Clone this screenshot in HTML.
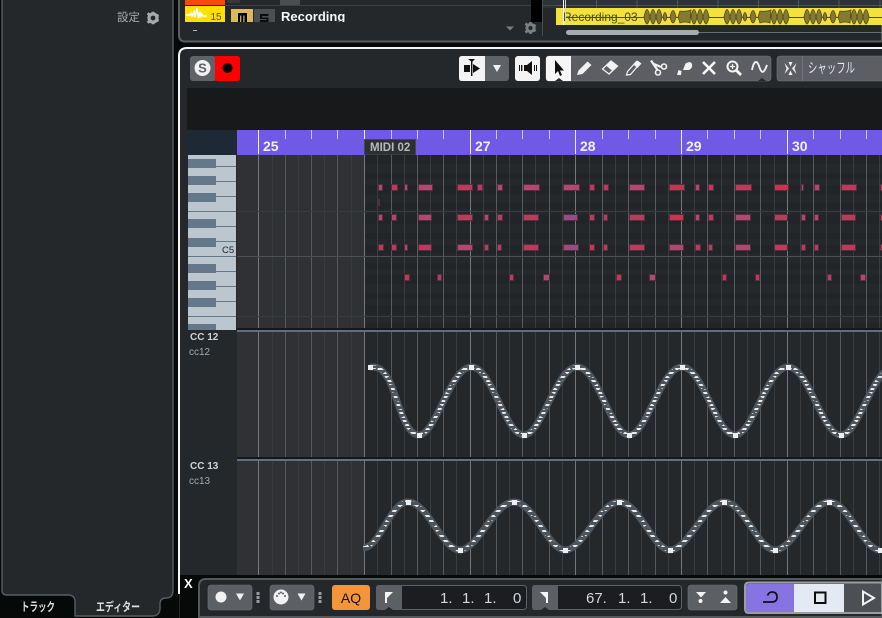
<!DOCTYPE html>
<html><head><meta charset="utf-8"><style>
html,body{margin:0;padding:0;background:#070808;width:882px;height:618px;overflow:hidden}
svg{display:block;font-family:"Liberation Sans","Noto Sans CJK JP",sans-serif}
.n rect{height:6px;stroke:#5c2b3d;stroke-width:1;fill:#b83d5c}
.r1 rect{y:184.5px}.r2 rect{y:199.5px}.r3 rect{y:214.5px}.r4 rect{y:244.5px}.r5 rect{y:274.5px}
.n .b{fill:#ac4a70}.n .p{fill:#934e84}.n .d{fill:#c63650}
.num{font-size:15px;fill:#d3d7db}
.rul{font-size:14px;font-weight:bold;fill:#f2efff}
.cc{font-size:10px;font-weight:bold;fill:#ccd4da}
.cs{font-size:10px;fill:#a0abb3}
</style></head><body>
<svg width="882" height="618" viewBox="0 0 882 618" xmlns="http://www.w3.org/2000/svg">
<defs>
<pattern id="rows" x="0" y="155" width="10" height="30" patternUnits="userSpaceOnUse">
<rect width="10" height="30" fill="#24282b"/>
<rect y="0" width="10" height="9" fill="#222528"/>
<rect y="18" width="10" height="6" fill="#222528"/>
</pattern>
<pattern id="st4" x="0" y="0" width="10" height="4" patternUnits="userSpaceOnUse"><rect y="0" width="10" height="2" fill="#e8eaec"/></pattern>
<pattern id="st5" x="0" y="0" width="10" height="5" patternUnits="userSpaceOnUse"><rect y="0" width="10" height="2" fill="#e8eaec"/></pattern>
<pattern id="wave" x="643" y="8" width="80" height="17" patternUnits="userSpaceOnUse">
<path d="M1 9Q4 -6 7 9Q4 23 1 9ZM7 9Q10 -6 13 9Q10 23 7 9ZM13 9Q16 -6 19 9Q16 23 13 9ZM20 9Q22 0 24 9Q22 17 20 9ZM27 9Q30 -4 33 9Q30 21 27 9ZM35 9L37 3Q42 4 48 2L47 15Q42 13 37 15ZM48 9Q51 -6 54 9Q51 23 48 9ZM54 9Q57 -6 60 9Q57 23 54 9ZM60 9Q63 -6 66 9Q63 23 60 9Z" fill="#857a30" stroke="#4f4a24" stroke-width=".8"/>
</pattern>
<path id="cc12" d="M370 367C378 367 381 367 389 380C397 395 404 435 419 435C436 435 450 367 471.5 367C492 367 505 435 524 435C542 435 556 367 577 367C598 367 611 435 629 435C647 435 661 367 682 367C703 367 716 435 735 435C753 435 767 367 788 367C809 367 822 435 841 435C859 435 873 367 894 367"/>
<path id="cc13" d="M363 548C380 548 390 502 408 502C428 502 442 550 460 550C478 550 494 502 514 502C534 502 548 550 565 550C583 550 600 502 619 502C639 502 653 550 670 550C688 550 705 502 724 502C744 502 758 550 775 550C793 550 810 502 829 502C849 502 863 550 880 550"/>
</defs>

<rect width="882" height="618" fill="#070808"/>

<!-- left panel -->
<path d="M2 -2V590Q2 595 7 595H68Q75 595 75 602V616H152Q160 616 160 608V604Q160 598 166 598Q173 598 173 590V-2Z" fill="#24282b" stroke="#595d60" stroke-width="1.4"/>
<text x="117" y="21" font-size="11.5" fill="#a6a9ab">設定</text>
<g transform="translate(153 18)" fill="#a6a9ab"><circle r="4" fill="none" stroke="#a6a9ab" stroke-width="3.2"/><path d="M-1.4-6.3h2.8v2.400h-2.8zM-1.4 3.900h2.800v2.400h-2.800zM-6.200-3.400l1.400-2.400 2.100 1.200-1.400 2.400zM2.700 3.100l1.400-2.400 2.100 1.200-1.400 2.400zM-6.200 3.400l1.400 2.400 2.100-1.200-1.400-2.400zM2.700-3.100l1.400 2.400 2.100-1.200-1.400-2.400z"/></g>
<text x="21" y="611" font-size="12" font-weight="bold" textLength="34" lengthAdjust="spacingAndGlyphs" fill="#dcdee0">トラック</text>
<text x="96" y="611" font-size="12" font-weight="bold" textLength="44" lengthAdjust="spacingAndGlyphs" fill="#dcdee0">エディター</text>

<!-- top panel -->
<path d="M179 -2V35Q179 41.500 185 41.500H882V-2Z" fill="#24282b" stroke="#5a5e61" stroke-width="2"/>
<rect x="225" y="5" width="306" height="1" fill="#3d4144"/>
<rect x="227" y="0" width="13" height="3" fill="#34383b"/>
<rect x="280" y="0" width="20" height="5" fill="#4a4e51"/>
<rect x="185" y="0" width="40" height="5" fill="#f74a05"/>
<rect x="185" y="6" width="40" height="16" fill="#fde003"/>
<path d="M186 15h4l1-2 1 3 2-4 1 5 2-9 1.500 10 1.500-6 1 4 1-2 1 2h4" fill="none" stroke="#fff" stroke-width="1.6"/>
<text x="210.500" y="20" font-size="10" fill="#5a5210">15</text>
<rect x="231" y="9" width="22" height="13" fill="#d8b95e"/>
<rect x="254" y="9" width="21" height="13" fill="#4c4f52"/>
<path d="M238 13h9v9h-2.500v-6.500h-1.200v6.500h-2v-6.500h-1.200v6.500H238z" fill="#000"/>
<path d="M260 14h8.500v2h-6.500v1.500h6.500V22H260v-2h6.500v-1h-6.500z" fill="#0c0c0c"/>
<rect x="185" y="22" width="345" height="18" fill="#24282b"/>
<text x="281" y="21" font-size="13" font-weight="bold" fill="#f4f6f8">Recording</text>
<rect x="280" y="22" width="80" height="4" fill="#24282b"/>
<rect x="193" y="30" width="4" height="1" fill="#a8b4c4"/>
<rect x="531" y="0" width="11" height="22" fill="#000"/>
<path d="M506 26.500h8l-4 4z" fill="#7a7d80"/>
<g transform="translate(530.500 28)" fill="#7c7f82"><circle r="3.600" fill="none" stroke="#7c7f82" stroke-width="3"/><path d="M-1.300-6h2.600v2.400h-2.600zM-1.300 3.600h2.600V6h-2.600zM-5.800-3.300l1.300-2.200 2 1.200-1.300 2.200zM2.500 2.900l1.300-2.200 2 1.200-1.300 2.200zM-5.800 3.300l1.300 2.200 2-1.200-1.300-2.200zM2.500-2.900l1.300 2.200 2-1.200-1.300-2.200z"/></g>
<rect x="542" y="0" width="1" height="36" fill="#4a4e51"/>
<rect x="543" y="0" width="339" height="8" fill="#2d3237"/>
<rect x="543" y="5" width="13" height="1" fill="#44484c"/><rect x="556" y="5" width="326" height="1" fill="#4c5257"/>
<path d="M596.500 0v8M637 0v8M677.500 0v8M718 0v8M758.500 0v8M798.500 0v8M839 0v8M880 0v8" stroke="#505659"/>
<rect x="556" y="8" width="326" height="17" fill="#f3e23e"/>
<rect x="564" y="17" width="318" height="1" fill="#4f4a20"/>
<rect x="643" y="8" width="239" height="17" fill="url(#wave)"/>
<text x="563" y="21" font-size="12" fill="#4f4a20">Recording_03</text>
<rect x="563" y="0" width="1" height="25" fill="#fff"/><rect x="565" y="0" width="1" height="25" fill="#d8d8d8"/>
<rect x="699" y="32" width="183" height="1" fill="#6a6e71"/>
<rect x="566" y="30" width="133" height="5" rx="2.500" fill="#a9abad"/>

<!-- editor panel -->
<path d="M179 595V56Q179 48 187 48H882V618H179Z" fill="#24282b"/>
<path d="M179 594V56Q179 48 187 48H882" fill="none" stroke="#f5f5f5" stroke-width="2"/>
<rect x="187" y="88" width="695" height="42" fill="#17191b"/>

<!-- toolbar -->
<rect x="190" y="56" width="26" height="25" rx="3" fill="#5f6266"/>
<path d="M215 56h22q3 0 3 3v19q0 3-3 3h-22z" fill="#fe0000"/>
<circle cx="202.500" cy="68" r="8" fill="#f1f1f1"/><text x="202.500" y="72.500" font-size="13" font-weight="bold" text-anchor="middle" fill="#5f6266">S</text>
<circle cx="227.500" cy="68" r="5" fill="#0a0000"/>

<rect x="459" y="56" width="50" height="25" rx="3" fill="#5f6266"/>
<path d="M462 56h23v25h-23q-3 0-3-3v-19q0-3 3-3z" fill="#f4f4f4"/>
<path d="M464 65h6v7h-6zM473 64l7 4.500-7 4.500zM468 59h7l-3 3z" fill="#111"/><rect x="471" y="60" width="1.400" height="16" fill="#111"/>
<path d="M493 65h8l-4 7z" fill="#f0f0f0"/>
<rect x="515" y="56" width="25" height="25" rx="3" fill="#f4f4f4"/>
<path d="M519 65h1v6h-1zM521 65h1.400v6H521zM524 65h3l5-4v14l-5-4h-3zM534 65h1v6h-1zM536 65h1v6h-1z" fill="#111"/>

<rect x="546" y="56" width="225" height="25" rx="3" fill="#5c5e63" stroke="#74777b" stroke-width=".6"/>
<path d="M549 56h22v25h-22q-3 0-3-3v-19q0-3 3-3z" fill="#f6f6f6"/>
<path d="M555 81l4-3 4 3z" fill="#24282b"/>
<path d="M555 60v14l3-3 2 5 2-1-2-4.500h4z" fill="#111"/>
<path d="M577 75l1.500-4.500 9-9 4 3.500-9 9z" fill="#f2f2f2"/>
<path d="M602.500 69l8.500-8 6.500 5-8.500 8z" fill="none" stroke="#f2f2f2" stroke-width="1.300"/><path d="M606 65.500l5-4.500 6.500 5-5 5z" fill="#f2f2f2"/>
<path d="M626.500 75l1-3.500 9-10 3 2.500-9 10.500z" fill="none" stroke="#f2f2f2" stroke-width="1.200"/><path d="M634 65l3.500-4.500 4 3-4 4.500z" fill="#f2f2f2"/>
<path d="M651 60.500l6.500 9.500M654 64l7 3" stroke="#f2f2f2" stroke-width="2.200" fill="none"/><circle cx="658" cy="72.500" r="2.500" fill="none" stroke="#f2f2f2" stroke-width="1.600"/><circle cx="664" cy="66.500" r="2.500" fill="none" stroke="#f2f2f2" stroke-width="1.600"/>
<path d="M683 70l2.500-6.500q5-3 6.500 0.500q1 4-3 6zM677 75l1.500-5 3 1-.5 4z" fill="#f2f2f2"/>
<path d="M703 62l12 12M715 62l-12 12" stroke="#f6f6f6" stroke-width="2.600"/>
<circle cx="732.500" cy="66.500" r="5" fill="none" stroke="#f6f6f6" stroke-width="2"/><path d="M736 70l5 5" stroke="#f6f6f6" stroke-width="2.800"/><path d="M730 66.500h5M732.500 64v5" stroke="#f6f6f6" stroke-width="1.200"/>
<path d="M752 70C754 60 757 60 759 66S763 76 767 65" fill="none" stroke="#f2f2f2" stroke-width="1.900"/>
<path d="M758 81l4-3 4 3z" fill="#24282b"/>
<rect x="777" y="56" width="110" height="25" rx="3" fill="#5c5e63" stroke="#74777b" stroke-width=".6"/>
<rect x="802" y="56" width="1" height="25" fill="#74777b"/>
<path d="M784.500 63l4.500 5.500-4.500 5.500 2-5.500zM796.500 63l-4.500 5.500 4.500 5.500-2-5.500zM788.500 62h4l-2 4.500zM788.500 75h4l-2-4.500z" fill="#f0f0f0"/>
<text x="808" y="73" font-size="14" textLength="47" lengthAdjust="spacingAndGlyphs" fill="#e2e7f0">シャッフル</text>

<!-- ruler -->
<rect x="187" y="130" width="50" height="25" fill="#1d2934"/>
<rect x="237" y="130" width="645" height="25" fill="#7059e4"/>
<path d="M258.500 130v24M364.500 130v24M470.500 130v24M575.500 130v24M681.500 130v24M787.500 130v24" stroke="#f0eeff"/>
<path d="M285.500 130v9M311.500 130v9M337.500 130v9M391.500 130v9M417.500 130v9M443.500 130v9M496.500 130v9M522.500 130v9M549.500 130v9M602.500 130v9M628.500 130v9M655.500 130v9M707.500 130v9M734.500 130v9M760.500 130v9M813.500 130v9M840.500 130v9M866.500 130v9" stroke="#cfc8f6"/>
<text class="rul" x="263" y="151">25</text><text class="rul" x="475" y="151">27</text><text class="rul" x="580" y="151">28</text><text class="rul" x="686" y="151">29</text><text class="rul" x="792" y="151">30</text>
<path d="M364.500 155v-15.500h51V155z" fill="#2d3033" stroke="#45494b"/>
<text x="370" y="151" font-size="11.500" font-weight="bold" fill="#b6b9bc">MIDI 02</text>

<!-- keyboard -->
<rect x="188" y="155" width="48" height="175" fill="#bcc6cf"/>
<g fill="#65788a"><rect x="188" y="159" width="28" height="9"/><rect x="188" y="176" width="28" height="9"/><rect x="188" y="193" width="28" height="9"/><rect x="188" y="219" width="28" height="9"/><rect x="188" y="238" width="28" height="9"/><rect x="188" y="264" width="28" height="9"/><rect x="188" y="281" width="28" height="9"/><rect x="188" y="298" width="28" height="9"/><rect x="188" y="324" width="28" height="6"/></g>
<g fill="#65788a"><rect x="216" y="166" width="20" height="1"/><rect x="216" y="181" width="20" height="1"/><rect x="216" y="196" width="20" height="1"/><rect x="188" y="211" width="48" height="1"/><rect x="216" y="226" width="20" height="1"/><rect x="216" y="241" width="20" height="1"/><rect x="188" y="256" width="48" height="1"/><rect x="216" y="271" width="20" height="1"/><rect x="216" y="286" width="20" height="1"/><rect x="216" y="301" width="20" height="1"/><rect x="188" y="316" width="48" height="1"/></g>
<text x="222" y="253" font-size="9.500" fill="#1d242a">C5</text>

<!-- grids -->
<rect x="237" y="155" width="128" height="420" fill="#2f3134"/>
<rect x="365" y="155" width="517" height="173" fill="url(#rows)"/>
<rect x="365" y="332" width="517" height="243" fill="#24282b"/>
<path d="M272.500 155V575M298.500 155V575M324.500 155V575M351.500 155V575M377.500 155V575M404.500 155V575M430.500 155V575M456.500 155V575M483.500 155V575M509.500 155V575M535.500 155V575M562.500 155V575M589.500 155V575M615.500 155V575M641.500 155V575M668.500 155V575M694.500 155V575M721.500 155V575M747.500 155V575M774.500 155V575M800.500 155V575M826.500 155V575M853.500 155V575M879.500 155V575" stroke="#383c3f"/>
<path d="M285.500 155V575M311.500 155V575M337.500 155V575M391.500 155V575M417.500 155V575M443.500 155V575M496.500 155V575M522.500 155V575M549.500 155V575M602.500 155V575M628.500 155V575M655.500 155V575M707.500 155V575M734.500 155V575M760.500 155V575M813.500 155V575M840.500 155V575M866.500 155V575" stroke="#56595d"/>
<path d="M258.500 155V575M364.500 155V575M470.500 155V575M575.500 155V575M681.500 155V575M787.500 155V575" stroke="#74787c"/>
<rect x="237" y="211" width="645" height="1" fill="#383c3f"/>
<rect x="237" y="256" width="645" height="1" fill="#4c5053"/>
<rect x="237" y="316" width="645" height="1" fill="#383c3f"/>
<rect x="237" y="328" width="645" height="2" fill="#15171a"/>
<rect x="237" y="330" width="645" height="2" fill="#5f7080"/>
<rect x="237" y="457" width="645" height="2" fill="#15171a"/>
<rect x="237" y="459" width="645" height="2" fill="#5f7080"/>
<text class="cc" x="190" y="340">CC 12</text><text class="cs" x="189" y="355">cc12</text>
<text class="cc" x="190" y="469">CC 13</text><text class="cs" x="189" y="484">cc13</text>

<!-- notes -->
<g class="n" transform="translate(.5 0)">
<g class="r1"><rect class="b" x="378" width="4"/><rect x="391" width="6"/><rect class="p" x="404" width="3"/><rect class="b" x="418" width="14"/><rect x="457" width="15"/><rect x="477" width="5"/><rect class="b" x="497" width="5"/><rect class="b" x="523" width="16"/><rect class="b" x="563" width="16"/><rect x="589" width="5"/><rect x="603" width="5"/><rect class="b" x="629" width="15"/><rect class="d" x="669" width="15"/><rect class="b" x="695" width="4"/><rect x="708" width="5"/><rect x="735" width="16"/><rect class="d" x="774" width="14"/><rect class="p" x="801" width="2"/><rect class="b" x="814" width="5"/><rect x="841" width="15"/><rect x="880" width="4"/></g>
<g class="r2"><rect class="p" x="378" width="1"/></g>
<g class="r3"><rect class="b" x="378" width="4"/><rect class="b" x="391" width="5"/><rect class="b" x="418" width="13"/><rect x="457" width="15"/><rect class="b" x="484" width="4"/><rect x="497" width="5"/><rect x="523" width="15"/><rect class="p" x="563" width="14"/><rect x="589" width="5"/><rect x="603" width="4"/><rect x="629" width="15"/><rect class="d" x="669" width="14"/><rect class="b" x="695" width="4"/><rect x="708" width="5"/><rect class="b" x="735" width="15"/><rect x="774" width="13"/><rect class="b" x="801" width="4"/><rect class="b" x="814" width="4"/><rect x="841" width="14"/><rect x="880" width="4"/></g>
<g class="r4"><rect x="378" width="5"/><rect x="391" width="5"/><rect class="b" x="404" width="3"/><rect x="418" width="13"/><rect class="b" x="457" width="15"/><rect x="484" width="4"/><rect x="497" width="4"/><rect x="523" width="15"/><rect class="p" x="563" width="15"/><rect class="d" x="589" width="5"/><rect x="603" width="4"/><rect x="629" width="15"/><rect class="b" x="669" width="14"/><rect x="695" width="5"/><rect x="708" width="4"/><rect class="b" x="735" width="15"/><rect x="774" width="13"/><rect x="801" width="4"/><rect x="814" width="4"/><rect x="841" width="14"/><rect x="880" width="4"/></g>
<g class="r5"><rect class="d" x="404" width="5"/><rect x="437" width="4"/><rect x="509" width="4"/><rect class="b" x="543" width="6"/><rect class="d" x="616" width="5"/><rect class="b" x="649" width="6"/><rect class="d" x="722" width="4"/><rect x="755" width="4"/><rect x="827" width="4"/><rect class="b" x="860" width="5"/></g>
</g>

<!-- cc curves -->
<g fill="none">
<use href="#cc12" stroke="#4d555c" stroke-width="7"/>
<use href="#cc12" stroke="url(#st4)" stroke-width="3.500" stroke-dasharray="6 2"/>
<use href="#cc13" stroke="#4d555c" stroke-width="7"/>
<use href="#cc13" stroke="url(#st5)" stroke-width="3.500" stroke-dasharray="6 2"/>
</g>
<g fill="#eceef0">
<rect x="368" y="365" width="5" height="5"/><rect x="417" y="433" width="5" height="5"/><rect x="469" y="365" width="5" height="5"/><rect x="522" y="433" width="5" height="5"/><rect x="575" y="365" width="5" height="5"/><rect x="627" y="433" width="5" height="5"/><rect x="680" y="365" width="5" height="5"/><rect x="733" y="433" width="5" height="5"/><rect x="786" y="365" width="5" height="5"/><rect x="839" y="433" width="5" height="5"/>
<rect x="406" y="500" width="5" height="5"/><rect x="458" y="548" width="5" height="5"/><rect x="512" y="500" width="5" height="5"/><rect x="563" y="548" width="5" height="5"/><rect x="617" y="500" width="5" height="5"/><rect x="668" y="548" width="5" height="5"/><rect x="722" y="500" width="5" height="5"/><rect x="773" y="548" width="5" height="5"/><rect x="827" y="500" width="5" height="5"/><rect x="878" y="548" width="5" height="5"/>
</g>

<!-- bottom -->
<rect x="180" y="575" width="702" height="43" fill="#070808"/>
<rect x="178" y="575" width="2" height="19" fill="#f5f5f5"/>
<text x="184" y="588" font-size="13" font-weight="bold" fill="#fff">X</text>
<path d="M199 618V586Q199 579 206 579H882V617H199Z" fill="#24282b" stroke="#55595c" stroke-width="2"/>
<rect x="208" y="585" width="44" height="25" rx="3" fill="#5c5f63" stroke="#6e7175" stroke-width=".6"/>
<circle cx="221" cy="597" r="5.500" fill="#f2f2f2"/><path d="M236 593.500h8l-4 7z" fill="#f2f2f2"/>
<rect x="256.500" y="592" width="3" height="3" fill="#9a9da0"/><rect x="256.500" y="596" width="3" height="3" fill="#9a9da0"/><rect x="256.500" y="600" width="3" height="3" fill="#9a9da0"/>
<rect x="270" y="585" width="44" height="25" rx="3" fill="#5c5f63" stroke="#6e7175" stroke-width=".6"/>
<circle cx="281" cy="597" r="7.500" fill="#f2f2f2"/><g fill="#5c5f63"><circle cx="277" cy="596" r="1"/><circle cx="279" cy="593.500" r="1"/><circle cx="281" cy="592.500" r="1"/><circle cx="283" cy="593.500" r="1"/><circle cx="285" cy="596" r="1"/></g>
<path d="M297.500 593.500h8l-4 7z" fill="#f2f2f2"/>
<rect x="318.500" y="592" width="3" height="3" fill="#9a9da0"/><rect x="318.500" y="596" width="3" height="3" fill="#9a9da0"/><rect x="318.500" y="600" width="3" height="3" fill="#9a9da0"/>
<rect x="332" y="585" width="38" height="25" rx="3" fill="#f2953b"/>
<text x="351" y="603" font-size="14" text-anchor="middle" fill="#1a1206">AQ</text>

<rect x="376.500" y="585.500" width="150" height="24" rx="3" fill="#1b1d20" stroke="#5e6165"/>
<path d="M379 585h23v25h-23q-3 0-3-3v-19q0-3 3-3z" fill="#5c5f63"/>
<path d="M385 592h8l-6 6v5h-2z" fill="#f6f6f6"/><path d="M385 610l4-3 4 3z" fill="#24282b"/>
<text class="num" x="440" y="603">1.</text><text class="num" x="462" y="603">1.</text><text class="num" x="484" y="603">1.</text><text class="num" x="513" y="603">0</text>
<rect x="532.500" y="585.500" width="149" height="24" rx="3" fill="#1b1d20" stroke="#5e6165"/>
<path d="M535 585h23v25h-23q-3 0-3-3v-19q0-3 3-3z" fill="#5c5f63"/>
<path d="M548 592h-8l6 6v5h2z" fill="#f6f6f6"/><path d="M541 610l4-3 4 3z" fill="#24282b"/>
<text class="num" x="586" y="603">67.</text><text class="num" x="618" y="603">1.</text><text class="num" x="640" y="603">1.</text><text class="num" x="669" y="603">0</text>
<rect x="688" y="585" width="49" height="25" rx="3" fill="#5c5f63" stroke="#6e7175" stroke-width=".6"/>
<path d="M696 592h10l-5 5.500z" fill="#f4f4f4"/><circle cx="700.500" cy="601" r="2" fill="#f4f4f4"/>
<path d="M720 603h11l-5.500-6z" fill="#f4f4f4"/><circle cx="725.500" cy="592.500" r="2" fill="#f4f4f4"/>
<path d="M882 582.500H749q-4 0-4 4V609q0 4 4 4H882z" fill="#4c5054" stroke="#9a9da1" stroke-width="2"/>
<path d="M749 584h45v28h-45q-3 0-3-3v-22q0-3 3-3z" fill="#8774e2"/>
<rect x="794" y="584" width="50" height="28" fill="#e4eaf3"/>
<path d="M763 602h9q5 0 5-5t-5-5q-3 0-4.500 3.500" fill="none" stroke="#111" stroke-width="1.700"/>
<rect x="815" y="592.500" width="10.500" height="10.500" fill="none" stroke="#0c0c0c" stroke-width="2"/>
<path d="M863 591.500v13l11-6.500z" fill="none" stroke="#f2f2f2" stroke-width="2"/>
</svg>
</body></html>
